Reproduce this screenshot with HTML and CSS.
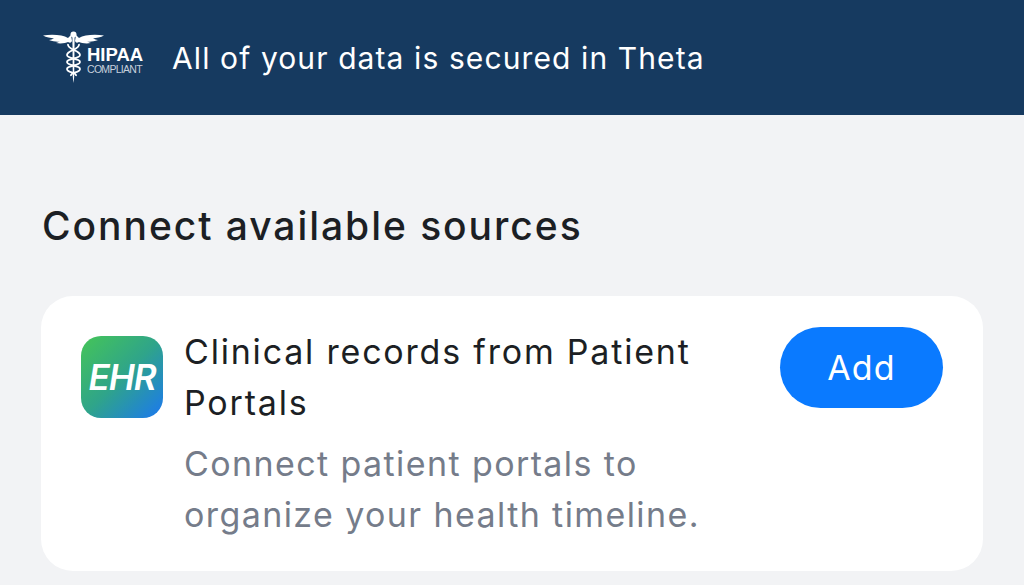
FILE: index.html
```html
<!DOCTYPE html>
<html lang="en">
<head>
<meta charset="utf-8">
<title>Connect sources</title>
<link rel="stylesheet" href="styles.css">
</head>
<body>
<header class="banner">
  <div class="hipaa">
    <svg class="caduceus" width="62" height="56" viewBox="0 0 62 56" aria-hidden="true">
      <g fill="#fff">
        <circle cx="30.500" cy="5.500" r="3"/>
        <path d="M28 6 L25 9 C20 6 10 5 0 6.500 C3 8.500 8 9 11 9.500 C9 10.500 8 10.500 6 11 C10 12.500 14 13 17 12.500 C15 13.500 14 13.500 13 14 C18 15 23 14 25 13 C27 14 28 14 29 12 Z"/>
        <path d="M33 6 L36 9 C41 6 51 5 61 6.500 C58 8.500 53 9 50 9.500 C52 10.500 53 10.500 55 11 C51 12.500 47 13 44 12.500 C46 13.500 47 13.500 48 14 C43 15 38 14 36 13 C34 14 33 14 32 12 Z"/>
        <path d="M29.400 8 H31.600 L31.200 48 L30.500 54 L29.800 48 Z"/>
      </g>
      <path class="snake" d="M25 15 C24 21 37 21 37 26 C37 30 24 29 24 33 C24 37 37 36 37 40 C37 44 27 43 28 47"/>
      <path class="snake" d="M36 15 C37 21 24 21 24 26 C24 30 37 29 37 33 C37 37 24 36 24 40 C24 44 34 43 33 47"/>
    </svg>
    <div class="hipaa-words">
      <span class="hipaa-name">HIPAA</span>
      <span class="hipaa-sub">COMPLIANT</span>
    </div>
  </div>
  <p class="banner-text">All of your data is secured in Theta</p>
</header>
<main class="content">
  <h1 class="heading">Connect available sources</h1>
  <section class="card">
    <div class="ehr-icon"><span>EHR</span></div>
    <div class="card-body">
      <h2 class="card-title">Clinical records from Patient Portals</h2>
      <p class="card-desc">Connect patient portals to organize your health timeline.</p>
    </div>
    <button class="add-btn" type="button">Add</button>
  </section>
</main>
</body>
</html>
```
FILE: styles.css
```css
* { box-sizing: border-box; }
html, body { margin: 0; padding: 0; }
body {
  width: 1024px;
  height: 585px;
  overflow: hidden;
  background: #f2f3f5;
  font-family: Inter, "Liberation Sans", sans-serif;
}
.banner {
  height: 115px;
  background: #163a60;
  display: flex;
  align-items: center;
  padding-left: 43px;
  gap: 29px;
}
.hipaa {
  position: relative;
  width: 100px;
  height: 56px;
  margin-top: -2px;
}
.caduceus { position: absolute; left: 0; top: 0; }
.snake { fill: none; stroke: #fff; stroke-width: 1.800; }
.hipaa-words {
  position: absolute;
  left: 44px;
  top: 17px;
  display: flex;
  flex-direction: column;
  color: #fff;
  font-family: "Liberation Sans", sans-serif;
}
.hipaa-name { font-size: 18.500px; line-height: 18px; font-weight: 700; letter-spacing: 0; }
.hipaa-sub { font-size: 10.500px; line-height: 11px; color: #c6d0dc; letter-spacing: -0.700px; }
.banner-text {
  margin: 0;
  color: #fff;
  font-size: 30px;
  line-height: 36px;
  letter-spacing: 1.100px;
}
.content { padding: 90px 41px 0; }
.heading {
  margin: 0 0 49px 1px;
  color: #1c1f24;
  font-size: 39px;
  line-height: 42px;
  font-weight: 500;
  letter-spacing: 1.950px;
}
.card {
  width: 942px;
  height: 275px;
  background: #fff;
  border-radius: 32px;
  padding: 31px 40px 0;
  display: flex;
  align-items: flex-start;
}
.ehr-icon {
  width: 82px;
  height: 82px;
  margin-top: 9px;
  flex: none;
  border-radius: 20px;
  background: linear-gradient(135deg, #45c557 0%, #2fa48a 50%, #1b78f0 100%);
  display: flex;
  align-items: center;
  justify-content: center;
}
.ehr-icon span {
  color: #fff;
  font-size: 35px;
  font-weight: 600;
  font-style: italic;
  letter-spacing: -1px;
}
.card-body { width: 570px; margin-left: 21px; margin-top: -1px; flex: none; }
.card-title {
  margin: 0;
  color: #1c1f24;
  font-size: 34px;
  line-height: 51px;
  font-weight: 400;
  letter-spacing: 1.800px;
}
.card-desc {
  margin: 10px 0 0;
  color: #757c8a;
  font-size: 34px;
  line-height: 51px;
  letter-spacing: 1.400px;
}
.add-btn {
  width: 163px;
  height: 81px;
  margin-left: auto;
  border: 0;
  border-radius: 41px;
  background: #0a7aff;
  color: #fff;
  font-family: inherit;
  font-size: 34px;
  font-weight: 400;
  letter-spacing: 1.100px;
}
```
